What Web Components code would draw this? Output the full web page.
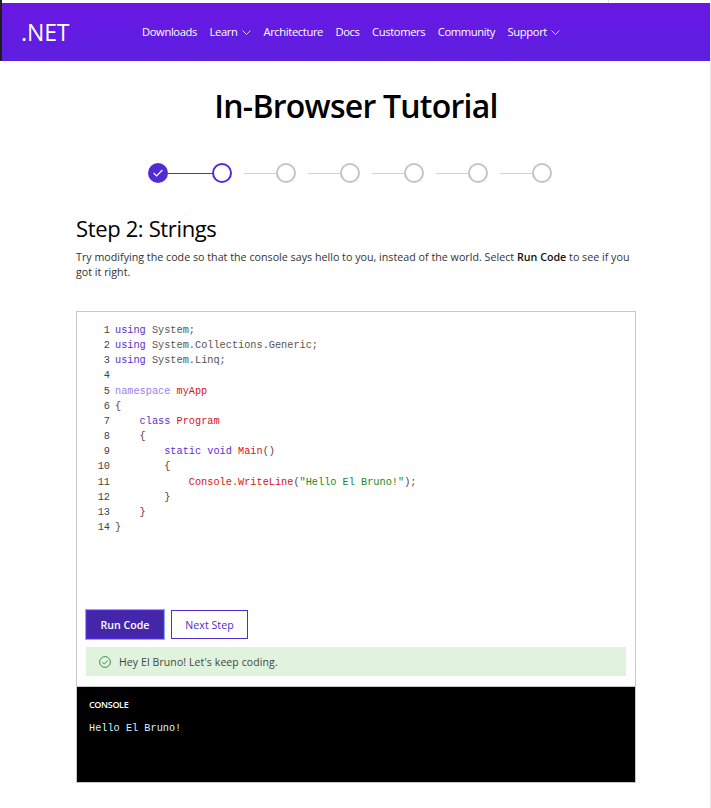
<!DOCTYPE html>
<html lang="en"><head><meta charset="utf-8"><title>In-Browser Tutorial</title>
<style>
html,body{margin:0;padding:0;background:#fff;height:100%;overflow:hidden}
body{font-family:"Open Sans","Noto Sans",sans-serif;box-sizing:border-box;height:808px;padding:3px 1px 0 2px;
background:linear-gradient(#1e1e1e,#1e1e1e) 0 0/2px 61px no-repeat,linear-gradient(#e6e6e6,#e6e6e6) 710px 0/1px 100% no-repeat,linear-gradient(#e0e0e0,#e0e0e0) 608px 0/1px 3px no-repeat,#fff}
</style></head><body>
<tutorial-page>
<site-nav></site-nav>
<page-title>In-Browser Tutorial</page-title>
<step-tracker></step-tracker>
<step-intro></step-intro>
<code-panel></code-panel>
</tutorial-page>
<script>
function def(name,html){customElements.define(name,class extends HTMLElement{constructor(){super();this.attachShadow({mode:'open'}).innerHTML=html;}});}
const SANS='"Open Sans","Noto Sans",sans-serif';
def('tutorial-page',`<style>:host{display:block}</style><slot></slot>`);
const chev=`<svg width="9" height="5" viewBox="0 0 9 5" style="margin-left:4.5px;margin-top:2px"><path d="M.5.5l4 4 4-4" fill="none" stroke="#e6dcf8" stroke-width=".9"/></svg>`;
def('site-nav',`<style>
:host{display:flex;align-items:center;height:58px;background:linear-gradient(180deg,#6a17e4,#5c20e0);color:#fff;box-sizing:border-box;padding-left:19px}
.logo{font:400 23px ${SANS};letter-spacing:-.1px;width:121px;flex:none}
nav{display:flex;gap:12.5px;font:400 11.2px ${SANS};letter-spacing:-.37px;align-items:center;padding-bottom:2px}
a{display:flex;align-items:center;color:#fff}
</style><div class="logo">.NET</div><nav><a>Downloads</a><a>Learn${chev}</a><a>Architecture</a><a>Docs</a><a>Customers</a><a>Community</a><a>Support${chev}</a></nav>`);
def('page-title',`<style>:host{display:block;text-align:center;font:600 32px/1 ${SANS};color:#000;letter-spacing:-.76px;padding-top:29px;height:63px;box-sizing:content-box}</style><slot></slot>`);
def('step-tracker',`<style>:host{display:flex;justify-content:center;align-items:center;padding-top:10px;height:20px;padding-right:12px}
.d{width:20px;height:20px;border-radius:50%;box-sizing:border-box;border:2px solid #c4c4c4;flex:none;display:flex;align-items:center;justify-content:center}
.d.done{background:#512bd4;border-color:#512bd4}.d.cur{border-color:#512bd4}
.l{width:32px;margin-left:12px;height:1px;background:#d0d0d0;flex:none}.l.on{background:#512bd4;width:44px;margin-left:0}
</style><div class="d done"><svg width="10" height="8" viewBox="0 0 10 8"><path d="M.6 4l3 3L9.4 1" fill="none" stroke="#fff" stroke-width="1.2"/></svg></div><div class="l on"></div><div class="d cur"></div><div class="l"></div><div class="d"></div><div class="l"></div><div class="d"></div><div class="l"></div><div class="d"></div><div class="l"></div><div class="d"></div><div class="l"></div><div class="d"></div>`);
def('step-intro',`<style>:host{display:block;margin:0 74px;padding-top:30px;color:#171717}
h2{margin:0;font:400 22px/30px ${SANS};letter-spacing:-.36px;color:#000}
p{margin:7px 0 0;font:400 10.7px/15px ${SANS};letter-spacing:.01px;color:#333}
b{font-weight:600;color:#111}</style><h2>Step 2: Strings</h2><p>Try modifying the code so that the console says hello to you, instead of the world. Select <b>Run Code</b> to see if you<br>got it right.</p>`);
const K='<span class="k">',T='<span class="t">',D='<span class="d">',S='<span class="s">',P='<span class="p">',E='</span>';
const lines=[
`${K}using${E} ${D}System;${E}`,
`${K}using${E} ${D}System.Collections.Generic;${E}`,
`${K}using${E} ${D}System.Linq;${E}`,
``,
`<span class="n">namespace</span> ${T}myApp${E}`,
`${P}{${E}`,
`    ${K}class${E} ${T}Program${E}`,
`    ${P}{${E}`,
`        ${K}static${E} ${K}void${E} ${T}Main${E}${P}()${E}`,
`        ${P}{${E}`,
`            ${T}Console${E}${D}.${E}${T}WriteLine${E}${P}(${E}${S}"Hello El Bruno!"${E}${P})${E}${D};${E}`,
`        ${P}}${E}`,
`    ${P}}${E}`,
`${P}}${E}`];
def('code-editor',`<style>:host{display:grid;grid-template-columns:33px 1fr;column-gap:5px;font:400 10.25px/15.15px "Liberation Mono",monospace;height:288px;padding-top:11px;box-sizing:border-box}
.g{text-align:right;color:#444;white-space:pre}.c{white-space:pre;color:#444}
.k{color:#5b2fd0}.n{color:#9a7fe8}.t{color:#d81414}.d{color:#555}.s{color:#1a8a1a}.p{color:#6a3a40}
</style><div class="g">${lines.map((_,i)=>i+1).join('\n')}</div><div class="c">${lines.join('\n')}</div>`);
def('code-panel',`<style>:host{display:block;margin:31px 74px 0;border:1px solid #c8c8c8;height:472px;box-sizing:border-box;background:#fff}
.acts{display:flex;gap:7px;padding:10px 9px 0}
button{font:600 10.6px ${SANS};height:29px;box-sizing:border-box;padding:0;letter-spacing:0;border-radius:0}
.run{width:78px;background:#4426a8;color:#fff;border:1px solid #512bd4;outline:1px solid #8aa8f0}
.next{width:77px;background:#fff;color:#512bd4;border:1px solid #512bd4;font-weight:400;letter-spacing:.05px}
.ok{display:flex;align-items:center;gap:8px;height:29px;margin:8px 9px 0;background:#dff3dd;padding-left:13px;font:400 10.5px ${SANS};color:#444;letter-spacing:.1px}
.con{margin-top:10px;height:96px;background:#000;color:#fff;padding:12px 12px;box-sizing:border-box;border-top:1px solid #c8c8c8}
.h{font:600 9px/12px ${SANS};letter-spacing:-.35px}
pre{margin:10px 0 0;font:400 10.25px/14px "Liberation Mono",monospace;color:#d8f0ff}
</style><code-editor></code-editor><div class="acts"><button class="run">Run Code</button><button class="next">Next Step</button></div>
<div class="ok"><svg width="12" height="12" viewBox="0 0 12 12"><circle cx="6" cy="6" r="5.4" fill="none" stroke="#2e8b3a" stroke-width=".9"/><path d="M3.4 6.2l1.9 1.9 3.4-3.7" fill="none" stroke="#2e8b3a" stroke-width=".9"/></svg><span>Hey El Bruno! Let's keep coding.</span></div>
<div class="con"><div class="h">CONSOLE</div><pre>Hello El Bruno!</pre></div>`);
</script>
</body></html>
